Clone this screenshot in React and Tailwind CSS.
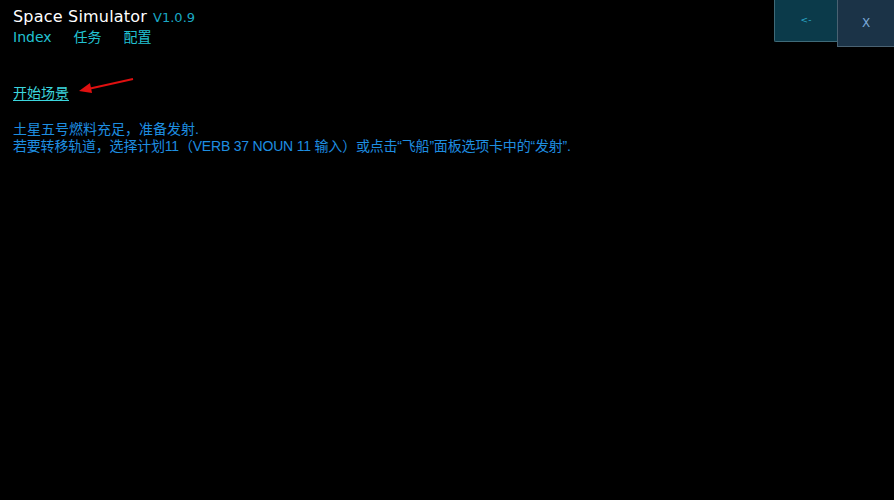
export default function App() {
  return (
    <div className="relative w-[894px] h-[500px] bg-black overflow-hidden" style={{ fontFamily: '"DejaVu Sans", "Noto Sans CJK SC", sans-serif' }}>
      <div className="flex justify-between">
        <div className="pl-[13px] pt-[7px]">
          <div className="flex items-baseline gap-[6px] leading-[20px]">
            <span className="text-[16px] text-white tracking-[0.2px]">Space Simulator</span>
            <span className="text-[13px] text-[#1aa8c4]">V1.0.9</span>
          </div>
          <div className="flex gap-[22px] text-[14px] text-[#22c2d2] leading-[18px]">
            <span>Index</span>
            <span>任务</span>
            <span>配置</span>
          </div>
        </div>
        <div className="flex items-start">
          <button className="w-[63px] h-[42px] bg-[#0b3a4a] border-l border-b border-[#3f6a78] rounded-bl-[2px] text-[#2aa8c8] text-[9px]">&lt;-</button>
          <button className="w-[57px] h-[47px] bg-[#1b3347] border-l border-b border-[#4a6272] text-[#7aa8d8] text-[12px]">X</button>
        </div>
      </div>
      <div className="pl-[13px] mt-[36px] relative leading-[20px]">
        <span className="text-[14px] text-[#3cd6de] underline underline-offset-2">开始场景</span>
        <svg className="absolute left-[76px] top-[-6px]" width="60" height="22" viewBox="0 0 60 22">
          <line x1="57" y1="2" x2="12" y2="12" stroke="#e01010" strokeWidth="2" />
          <polygon points="3,14 14,6 16,16" fill="#e01010" />
        </svg>
      </div>
      <div className="pl-[13px] mt-[18px] text-[14px] text-[#1e8ee0] leading-[17px]" style={{ fontFamily: '"Liberation Sans", "Noto Sans CJK SC", sans-serif' }}>
        <p>土星五号燃料充足，准备发射.</p>
        <p className="tracking-[-0.2px]">若要转移轨道，选择计划11（VERB 37 NOUN 11 输入）或点击“飞船”面板选项卡中的“发射”.</p>
      </div>
    </div>
  );
}
